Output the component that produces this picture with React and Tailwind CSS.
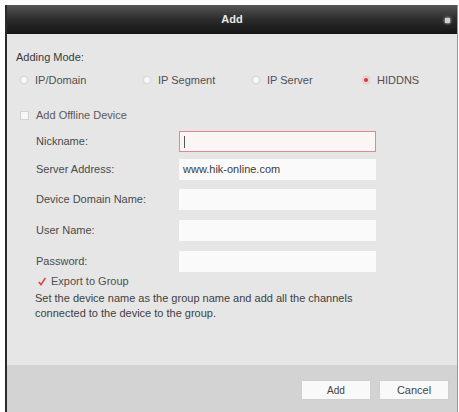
import { useState } from 'react';

const font = { fontFamily: '"Liberation Sans", Arial, sans-serif' };

const modes = [
  { label: 'IP/Domain', w: 'w-[123px]' },
  { label: 'IP Segment', w: 'w-[109px]' },
  { label: 'IP Server', w: 'w-[110px]' },
  { label: 'HIDDNS', w: 'w-auto' },
];

const fields = [
  { label: 'Nickname:', value: '', focus: true, mt: 'mt-[9px]' },
  { label: 'Server Address:', value: 'www.hik-online.com', mt: 'mt-[7px]' },
  { label: 'Device Domain Name:', value: '', mt: 'mt-[9px]' },
  { label: 'User Name:', value: '', mt: 'mt-[10px]' },
  { label: 'Password:', value: '', mt: 'mt-[10px]' },
];

function Radio({ checked }) {
  return (
    <span className="flex h-[8px] w-[8px] items-center justify-center rounded-full border border-[#dadada] bg-[#f8f8f8] shadow-[0_0_2px_rgba(0,0,0,0.08)]">
      {checked && <span className="h-[4px] w-[4px] rounded-full bg-[#e0303a] shadow-[0_0_3px_#ff6b74]" />}
    </span>
  );
}

export default function App() {
  const [mode, setMode] = useState('HIDDNS');

  return (
    <div className="h-[412px] w-[459px] overflow-hidden bg-white pl-[5px] pt-[5px]" style={font}>
      <div className="flex h-[407px] w-[453px] flex-col border-l-2 border-r border-l-[#2a2a2a] border-r-[#9a9a9a]">
        {/* title bar */}
        <div className="relative flex h-[29px] shrink-0 items-center justify-center bg-gradient-to-b from-[#555] via-[#2c2c2c] to-[#151515]">
          <span className="text-[11px] font-bold text-[#e8e8e8]">Add</span>
          <span className="absolute right-[7px] top-[13px] h-[5px] w-[5px] bg-[#d0d0d0] shadow-[0_0_3px_#fff]" />
        </div>

        {/* body */}
        <div className="flex h-[331px] shrink-0 flex-col bg-[#e6e6e6] pl-[9px] text-[11px] text-[#4a4a4a]">
          <div className="mt-[16px] leading-[14px] text-[#3a3a3a]">Adding Mode:</div>

          <div className="mt-[9px] flex h-[14px] items-center pl-[4px]">
            {modes.map((m) => (
              <button
                key={m.label}
                onClick={() => setMode(m.label)}
                className={`flex items-center gap-[7px] ${m.w}`}
              >
                <Radio checked={mode === m.label} />
                <span className="text-[11px] text-[#505050]">{m.label}</span>
              </button>
            ))}
          </div>

          <div className="mt-[21px] flex h-[14px] items-center gap-[7px] pl-[4px]">
            <span className="h-[9px] w-[9px] border border-[#d2d2d2] bg-[#f7f7f7]" />
            <span className="text-[#5a5a5a]">Add Offline Device</span>
          </div>

          {fields.map((f) => (
            <div key={f.label} className={`flex items-center ${f.mt}`}>
              <span className="w-[163px] pl-[20px] text-[#4a4a4a]">{f.label}</span>
              <div
                className={`flex h-[21px] w-[197px] items-center px-[4px] text-[11px] text-[#3a3a3a] ${
                  f.focus ? 'border border-[#dc8a8e] bg-[#fbf5f5]' : 'bg-[#fafafa]'
                }`}
              >
                {f.focus && <span className="h-[12px] w-px bg-[#555]" />}
                {f.value}
              </div>
            </div>
          ))}

          <div className="mt-[3px] flex h-[12px] items-center gap-[5px] pl-[22px]">
            <svg width="8" height="9" viewBox="0 0 8 9">
              <path d="M0.8 5 L3 7.6 L7.4 1" fill="none" stroke="#e0404a" strokeWidth="1.6" />
            </svg>
            <span className="text-[#505050]">Export to Group</span>
          </div>

          <p className="mt-[4px] w-[360px] pl-[19px] leading-[15px] text-[#3f3f3f]">
            Set the device name as the group name and add all the channels
            <br />
            connected to the device to the group.
          </p>
        </div>

        {/* footer */}
        <div className="flex flex-1 items-start justify-end gap-[10px] bg-[#d3d3d3] pr-[9px] pt-[16px]">
          <button className="h-[18px] w-[68px] bg-[#f9f9f9] text-[10px] text-[#444] shadow-[0_0_1px_#bbb]">Add</button>
          <button className="h-[18px] w-[68px] bg-[#f9f9f9] text-[11px] text-[#444] shadow-[0_0_1px_#bbb]">Cancel</button>
        </div>
      </div>
    </div>
  );
}
